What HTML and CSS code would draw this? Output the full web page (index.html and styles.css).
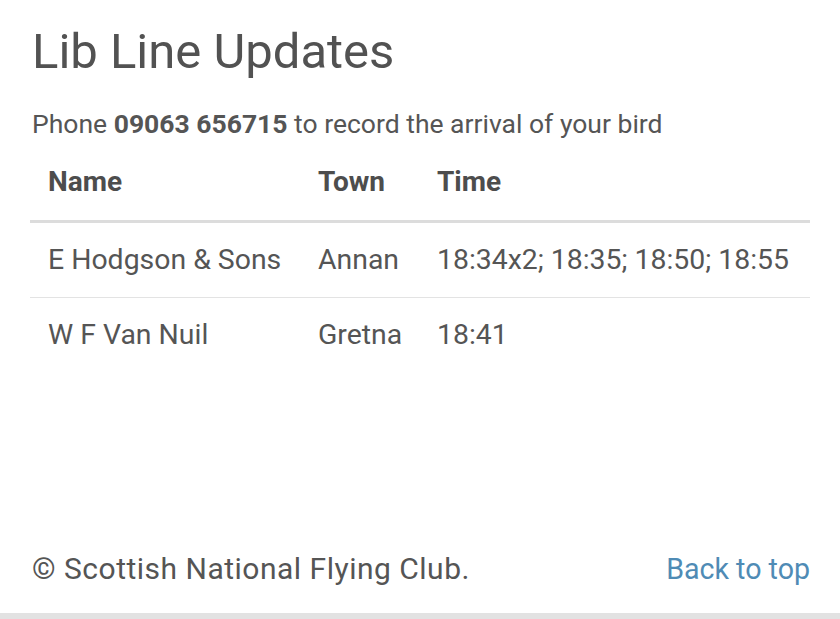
FILE: index.html
```html
<!DOCTYPE html>
<html>
<head>
<meta charset="utf-8">
<link rel="stylesheet" href="styles.css">
</head>
<body>
<main class="page">
  <h1 class="title">Lib Line Updates</h1>
  <p class="intro">Phone <strong>09063 656715</strong> to record the arrival of your bird</p>
  <table class="results">
    <colgroup><col class="c-name"><col class="c-town"><col class="c-time"></colgroup>
    <thead>
      <tr><th>Name</th><th>Town</th><th>Time</th></tr>
    </thead>
    <tbody>
      <tr><td>E Hodgson &amp; Sons</td><td>Annan</td><td>18:34x2; 18:35; 18:50; 18:55</td></tr>
      <tr><td>W F Van Nuil</td><td>Gretna</td><td>18:41</td></tr>
    </tbody>
  </table>
  <footer class="footer">
    <span class="copy">© Scottish National Flying Club.</span>
    <a class="top" href="#">Back to top</a>
  </footer>
</main>
<div class="bottom-bar"></div>
</body>
</html>
```
FILE: styles.css
```css
html, body { margin: 0; padding: 0; background: #fff; }
body { font-family: Roboto, "Noto Sans", sans-serif; color: #555; width: 840px; height: 619px; overflow: hidden; display: flex; flex-direction: column; }
.page { flex: 1; display: flex; flex-direction: column; padding: 0 30px; }
.title { font-size: 49px; font-weight: 400; margin: 22px 0 0 2px; line-height: 60px; color: #525252; }
.intro { font-size: 26.5px; margin: 26px 0 0 2px; line-height: 32px; }
.intro strong { font-weight: 700; }
.results { border-collapse: collapse; table-layout: fixed; width: 780px; margin-top: 14px; font-size: 28.4px; white-space: nowrap; }
.c-name { width: 270px; }
.c-town { width: 119px; }
.results th { text-align: left; font-weight: 700; font-size: 28px; color: #4d4d4d; padding: 12px 0 22px 18px; border-bottom: 3px solid #dcdcdc; line-height: 32px; }
.results td { padding: 21px 0 21px 18px; border-bottom: 1px solid #e3e3e3; line-height: 32px; }
.results tbody tr:last-child td { border-bottom: none; }
.footer { margin-top: auto; display: flex; justify-content: space-between; align-items: baseline; padding: 0 0 27px 2px; font-size: 29px; line-height: 34px; }
.copy { font-size: 30px; letter-spacing: 0.5px; }
.top { font-size: 28.6px; color: #4f8bb5; text-decoration: none; }
.bottom-bar { height: 6px; background: #e2e2e2; }
```
